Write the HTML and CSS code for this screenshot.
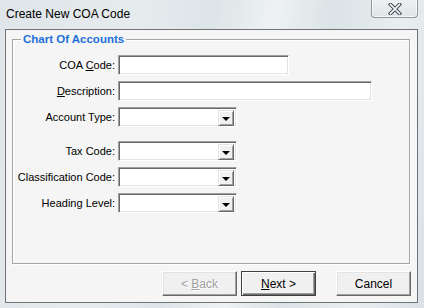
FILE: index.html
```html
<!DOCTYPE html>
<html>
<head>
<meta charset="utf-8">
<link rel="stylesheet" href="styles.css">
</head>
<body>
<div class="window">
  <div class="titlebar">
    <span class="title">Create New COA Code</span>
    <div class="close">
      <svg width="14" height="12" viewBox="0 0 14 12">
        <path d="M2.5 1.5 L11.5 10.5 M11.5 1.5 L2.5 10.5" stroke="#3c4650" stroke-width="3.6" stroke-linecap="square" fill="none"/>
        <path d="M2.5 1.5 L11.5 10.5 M11.5 1.5 L2.5 10.5" stroke="#ffffff" stroke-width="1.6" stroke-linecap="square" fill="none"/>
      </svg>
    </div>
  </div>
  <div class="client">
    <div class="group">
      <span class="legend">Chart Of Accounts</span>
      <div class="form">
        <label class="lbl">COA <u>C</u>ode:</label>
        <div class="field text short"></div>
        <label class="lbl"><u>D</u>escription:</label>
        <div class="field text long"></div>
        <label class="lbl">Account Type:</label>
        <div class="field combo"><span class="arrow"></span></div>
        <label class="lbl sep">Tax Code:</label>
        <div class="field combo sep"><span class="arrow"></span></div>
        <label class="lbl">Classification Code:</label>
        <div class="field combo"><span class="arrow"></span></div>
        <label class="lbl">Heading Level:</label>
        <div class="field combo"><span class="arrow"></span></div>
      </div>
    </div>
    <div class="buttons">
      <div class="btn disabled"><span>&lt; <u>B</u>ack</span></div>
      <div class="btn default"><span><u>N</u>ext &gt;</span></div>
      <div class="btn cancel"><span>Cancel</span></div>
    </div>
  </div>
</div>
</body>
</html>
```
FILE: styles.css
```css
html, body {
  margin: 0;
  padding: 0;
}
body {
  width: 424px;
  height: 308px;
  overflow: hidden;
  font-family: "Liberation Sans", Arial, sans-serif;
  font-size: 11px;
  color: #000;
}
.window {
  width: 424px;
  height: 308px;
  box-sizing: border-box;
  background: linear-gradient(100deg, #dfe5e8 0%, #e6ebee 30%, #dde4e7 45%, #eef2f3 58%, #dbe3e6 70%, #e9eef0 85%, #d9e1e5 100%);
  display: flex;
  flex-direction: column;
}
.titlebar {
  height: 29px;
  display: flex;
  align-items: flex-start;
  position: relative;
  flex: none;
}
.title {
  font-family: "Liberation Sans", Arial, sans-serif;
  font-size: 12px;
  margin-left: 6px;
  margin-top: 7px;
  color: #000;
}
.close {
  position: absolute;
  left: 371px;
  top: -1px;
  width: 45px;
  height: 18px;
  border: 1px solid #8d989f;
  border-top: none;
  border-radius: 0 0 4px 4px;
  background: linear-gradient(#eef1f3, #dfe4e7);
  box-shadow: inset 0 0 0 1px rgba(255,255,255,0.7);
  display: flex;
  align-items: center;
  justify-content: center;
}
.close svg {
  margin-top: 1px;
}
.client {
  margin-left: 5px;
  width: 413px;
  height: 274px;
  box-sizing: border-box;
  border: 1px solid #6f7478;
  background: #f5f5f5;
  display: flex;
  flex-direction: column;
  flex: none;
}
.group {
  position: relative;
  margin: 9px 0 0 6px;
  width: 398px;
  height: 225px;
  box-sizing: border-box;
  border: 1px solid #a5a5a5;
  box-shadow: inset 1px 1px #ffffff, 1px 1px #ffffff;
}
.legend {
  position: absolute;
  left: 8px;
  top: -8px;
  padding: 0 2px;
  background: #f5f5f5;
  color: #1f70d8;
  font-weight: bold;
  font-size: 11.5px;
  line-height: 15px;
}
.form {
  display: grid;
  grid-template-columns: 102px auto;
  column-gap: 3px;
  row-gap: 6px;
  padding-top: 15px;
  justify-items: start;
  align-items: center;
}
.lbl {
  justify-self: end;
  line-height: 20px;
  white-space: nowrap;
}
.sep {
  margin-top: 8px;
}
.field {
  height: 20px;
  box-sizing: border-box;
  background: #fff;
  border: 1px solid;
  border-color: #a0a0a0 #ffffff #ffffff #a0a0a0;
  box-shadow: inset 1px 1px #696969, inset -1px -1px #e3e3e3;
  position: relative;
}
.short { width: 171px; }
.long { width: 254px; }
.combo {
  width: 119px;
  display: flex;
  justify-content: flex-end;
  padding: 2px;
}
.arrow {
  width: 16px;
  height: 16px;
  box-sizing: border-box;
  background: #f0f0f0;
  border: 1px solid;
  border-color: #e3e3e3 #696969 #696969 #e3e3e3;
  box-shadow: inset 1px 1px #fff, inset -1px -1px #a0a0a0;
  display: flex;
  align-items: center;
  justify-content: center;
}
.arrow::after {
  content: "";
  width: 0;
  height: 0;
  border-left: 4px solid transparent;
  border-right: 4px solid transparent;
  border-top: 4px solid #000;
  margin-top: 1px;
}
.buttons {
  display: flex;
  justify-content: flex-end;
  margin-top: 7px;
  padding-right: 6px;
}
.btn {
  width: 75px;
  height: 25px;
  box-sizing: border-box;
  background: #f0f0f0;
  border: 1px solid;
  border-color: #fff #696969 #696969 #fff;
  box-shadow: inset -1px -1px #a0a0a0, inset 1px 1px #e3e3e3;
  display: flex;
  align-items: center;
  justify-content: center;
  font-size: 12px;
  white-space: pre;
}
.disabled {
  color: #a0a0a0;
  text-shadow: 1px 1px #ffffff;
  margin-right: 4px;
}
.default {
  border: 1px solid #404040;
  box-shadow: inset 1px 1px #fff, inset -1px -1px #696969, inset -2px -2px #a0a0a0;
  margin-right: 20px;
}
```
